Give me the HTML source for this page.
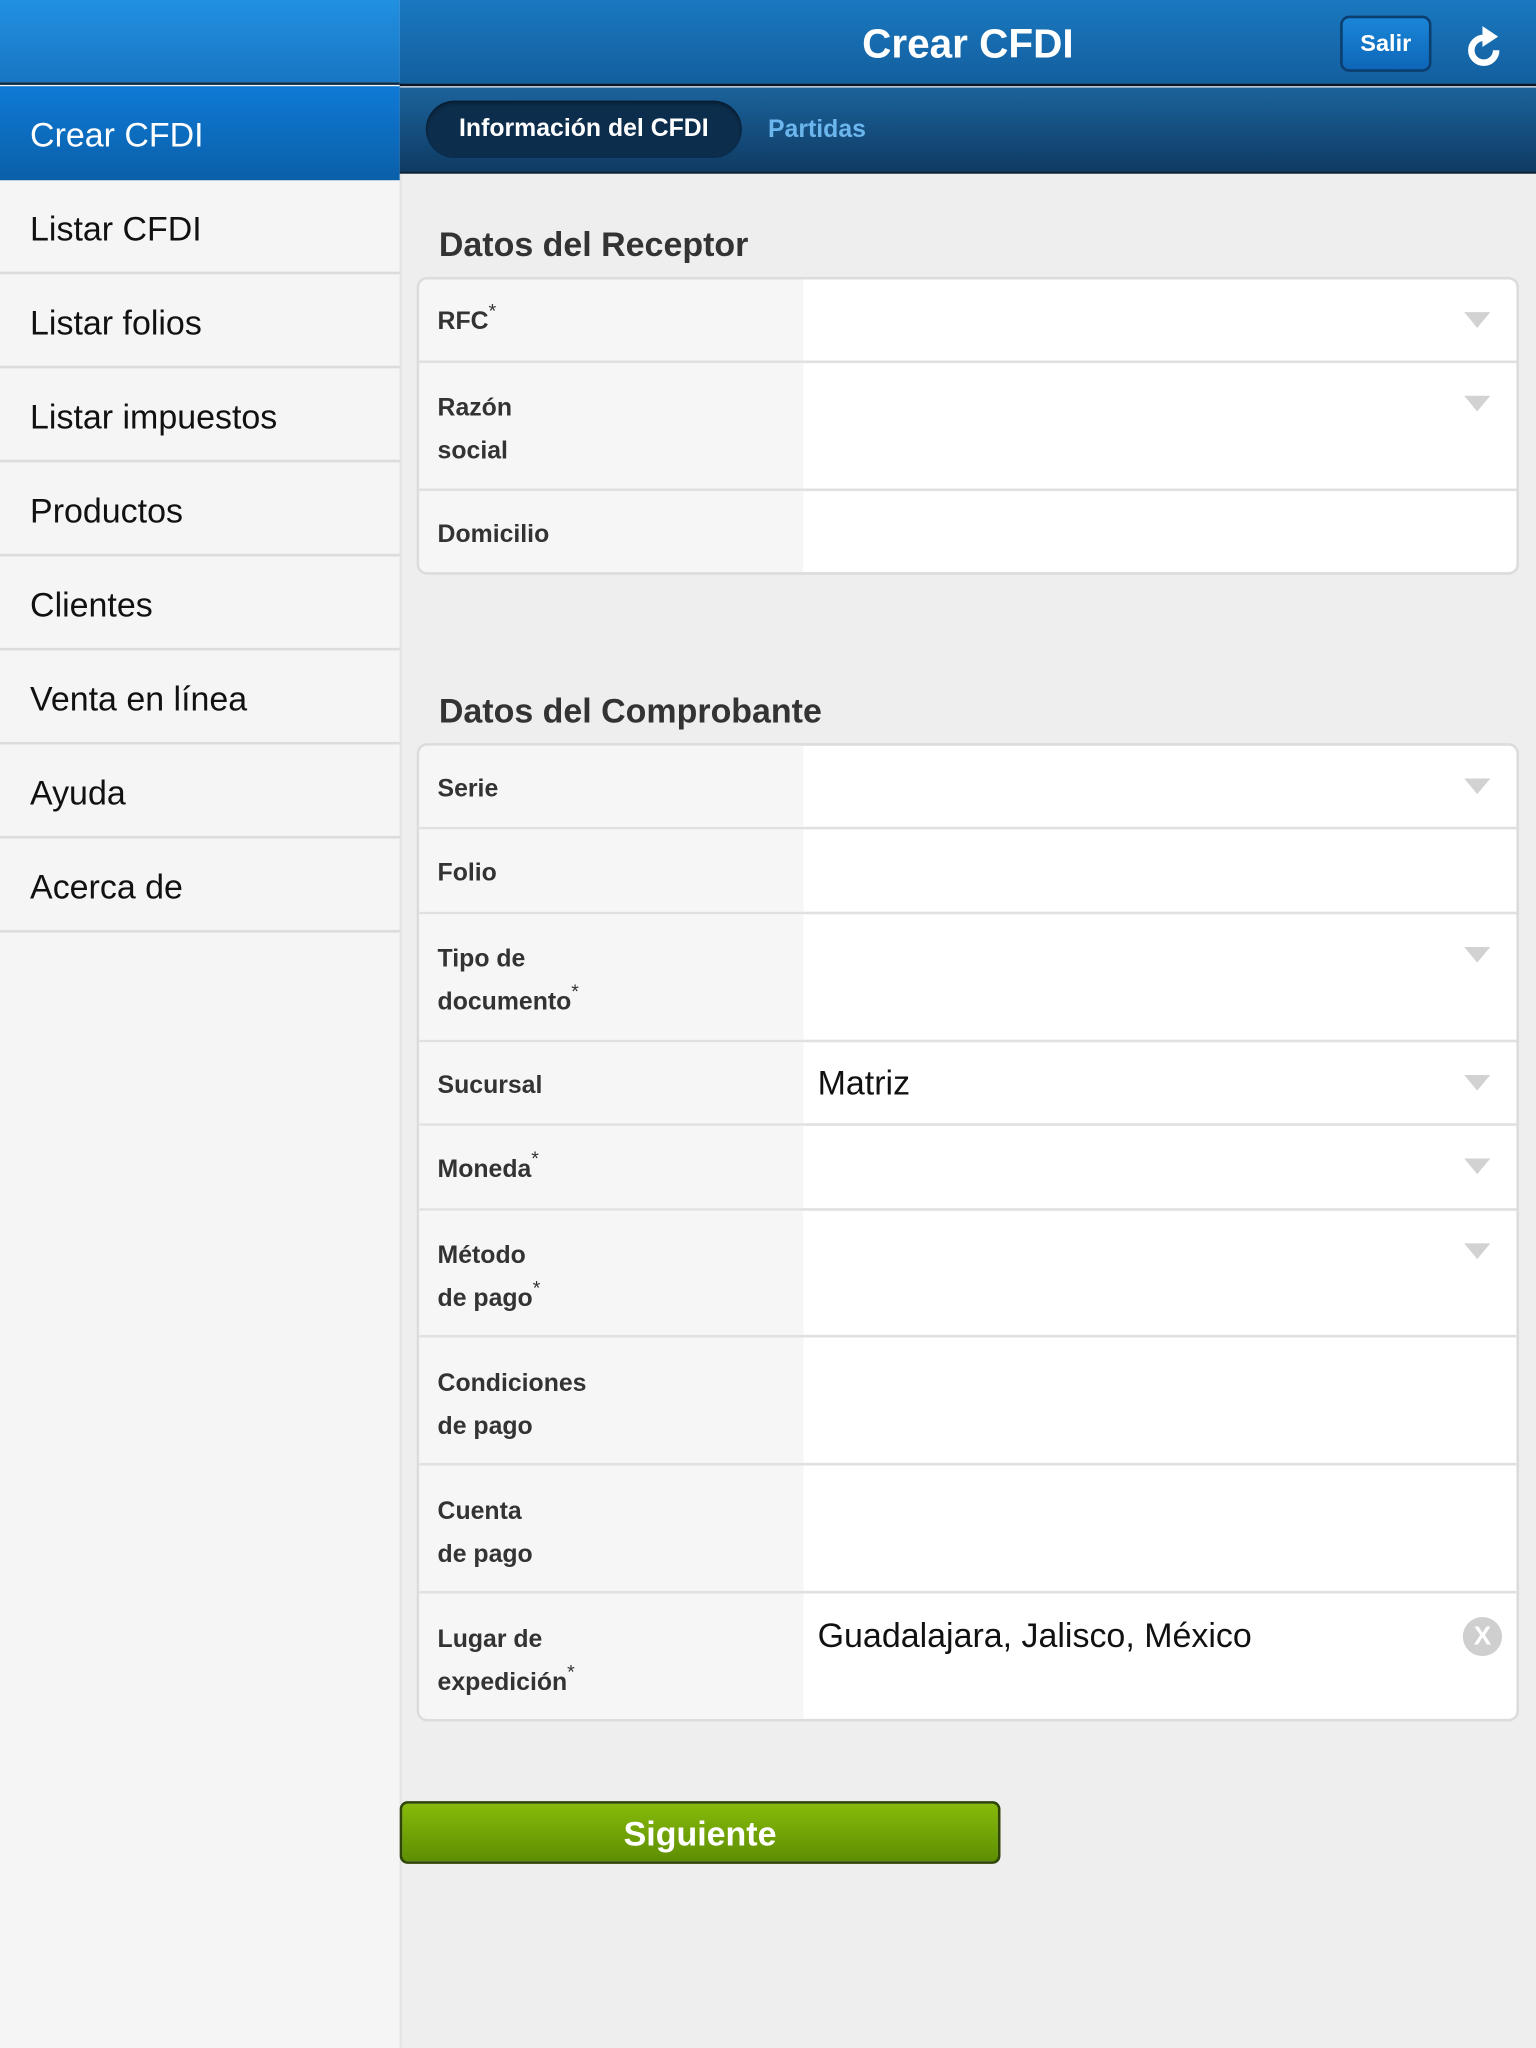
<!DOCTYPE html>
<html><head><meta charset="utf-8"><style>
*{margin:0;padding:0;box-sizing:border-box}
html,body{width:1536px;height:2048px;overflow:hidden;background:#eeeeee;font-family:"Liberation Sans",Arial,sans-serif}
#s{position:absolute;left:0;top:0;width:1176px;height:1568px;transform:scale(1.306122);transform-origin:0 0;background:#eeeeee}
.a{position:absolute}
.side{left:0;top:0;width:306px;height:1568px;background:#f6f5f5;box-shadow:1px 0 2px rgba(0,0,0,.08)}
.sb{left:0;top:0;width:306px;height:65px;background:linear-gradient(#2190e0,#1876c4);border-bottom:2px solid #0a2a45}
.sel{left:0;top:66px;width:306px;height:72px;background:linear-gradient(#0f7ad6,#0a5fa8);color:#fff;font-size:26px;line-height:74px;padding-left:23px}
.it{left:0;width:306px;height:72px;border-bottom:2px solid #dcdcdc;font-size:26px;line-height:74px;padding-left:23px;color:#111}
.hd{left:306px;top:0;width:870px;height:66px;background:linear-gradient(#1a78c0,#135f9e);border-bottom:2px solid #06182a}
.title{left:306px;top:0;width:870px;text-align:center;line-height:68px;color:#fff;font-weight:bold;font-size:31px}
.salir{left:1026px;top:12px;width:70px;height:43px;border:2px solid #0b3f70;border-radius:7px;background:linear-gradient(#1a86d8,#0e66b8);color:#fff;font-weight:bold;font-size:18px;text-align:center;line-height:38px}
.tb{left:306px;top:67px;width:870px;height:66px;background:linear-gradient(#1b639c,#0f3b64);border-bottom:2px solid #0a2238}
.pill{left:326px;top:77px;width:242px;height:44px;border-radius:22px;background:#0c2d4c;box-shadow:inset 0 2px 3px rgba(0,0,0,.4);color:#fff;font-weight:bold;font-size:19px;line-height:44px;text-align:center}
.part{left:588px;top:78px;line-height:44px;color:#6cb6ee;font-weight:bold;font-size:19px}
h2{position:absolute;left:336px;font-size:26px;font-weight:bold;color:#333}
.card{left:319px;width:844px;background:#fff;border:2px solid #dcdcdc;border-radius:8px;overflow:hidden}
.row{position:relative;border-bottom:2px solid #e0e0e0}
.row:last-child{border-bottom:none}
.lab{position:absolute;left:0;top:0;bottom:0;width:294px;background:#f6f6f6;padding-left:14px;font-weight:bold;font-size:19px;color:#333;line-height:33px}
.tri{position:absolute;right:20px;top:25px;width:0;height:0;border-left:10px solid transparent;border-right:10px solid transparent;border-top:12px solid #d2d2d2}
.val{position:absolute;left:305px;font-size:26px;color:#111}
sup{font-size:15px;font-weight:normal;line-height:0;vertical-align:0;position:relative;top:-9px}
.btn{left:306px;top:1379px;width:460px;height:48px;border:2px solid #2e4606;border-radius:6px;background:linear-gradient(#86bb0a,#5e8e02);color:#fff;font-weight:bold;font-size:26px;text-align:center;line-height:46px}
</style></head><body><div id="s">
<div class="a side"></div>
<div class="a sb"></div>
<div class="a sel">Crear CFDI</div>
<div class="a it" style="top:138px">Listar CFDI</div>
<div class="a it" style="top:210px">Listar folios</div>
<div class="a it" style="top:282px">Listar impuestos</div>
<div class="a it" style="top:354px">Productos</div>
<div class="a it" style="top:426px">Clientes</div>
<div class="a it" style="top:498px">Venta en línea</div>
<div class="a it" style="top:570px">Ayuda</div>
<div class="a it" style="top:642px">Acerca de</div>

<div class="a hd"></div>
<div class="a title">Crear CFDI</div>
<div class="a salir">Salir</div>
<svg class="a" style="left:1120px;top:16px" width="32" height="36" viewBox="0 0 32 36"><path d="M16 13 A9.5 9.5 0 1 0 25.5 22.5" fill="none" stroke="#fff" stroke-width="5"/><path d="M15 4 L27 12 L15 20 Z" fill="#fff"/></svg>
<div class="a tb"></div>
<div class="a pill">Información del CFDI</div>
<div class="a part">Partidas</div>

<h2 style="top:172px">Datos del Receptor</h2>
<div class="a card" style="top:212px">
<div class="row" style="height:64px"><div class="lab" style="padding-top:16px">RFC<sup>*</sup></div><div class="tri"></div></div>
<div class="row" style="height:98px"><div class="lab" style="padding-top:18px">Razón<br>social</div><div class="tri"></div></div>
<div class="row" style="height:62px"><div class="lab" style="padding-top:17px">Domicilio</div></div>
</div>

<h2 style="top:529px">Datos del Comprobante</h2>
<div class="a card" style="top:569px">
<div class="row" style="height:64px"><div class="lab" style="padding-top:17px">Serie</div><div class="tri"></div></div>
<div class="row" style="height:65px"><div class="lab" style="padding-top:17px">Folio</div></div>
<div class="row" style="height:98px"><div class="lab" style="padding-top:18px">Tipo de<br>documento<sup>*</sup></div><div class="tri"></div></div>
<div class="row" style="height:64px"><div class="lab" style="padding-top:17px">Sucursal</div><div class="val" style="top:16px">Matriz</div><div class="tri"></div></div>
<div class="row" style="height:65px"><div class="lab" style="padding-top:17px">Moneda<sup>*</sup></div><div class="tri"></div></div>
<div class="row" style="height:97px"><div class="lab" style="padding-top:18px">Método<br>de pago<sup>*</sup></div><div class="tri"></div></div>
<div class="row" style="height:98px"><div class="lab" style="padding-top:19px">Condiciones<br>de pago</div></div>
<div class="row" style="height:98px"><div class="lab" style="padding-top:19px">Cuenta<br>de pago</div></div>
<div class="row" style="height:96px"><div class="lab" style="padding-top:19px">Lugar de<br>expedición<sup>*</sup></div><div class="val" style="top:17px">Guadalajara, Jalisco, México</div>
<div style="position:absolute;right:11px;top:18px;width:30px;height:30px;border-radius:50%;background:#cfcfcf;color:#fff;font-weight:bold;font-size:20px;text-align:center;line-height:30px">X</div></div>
</div>

<div class="a btn">Siguiente</div>
</div></body></html>
